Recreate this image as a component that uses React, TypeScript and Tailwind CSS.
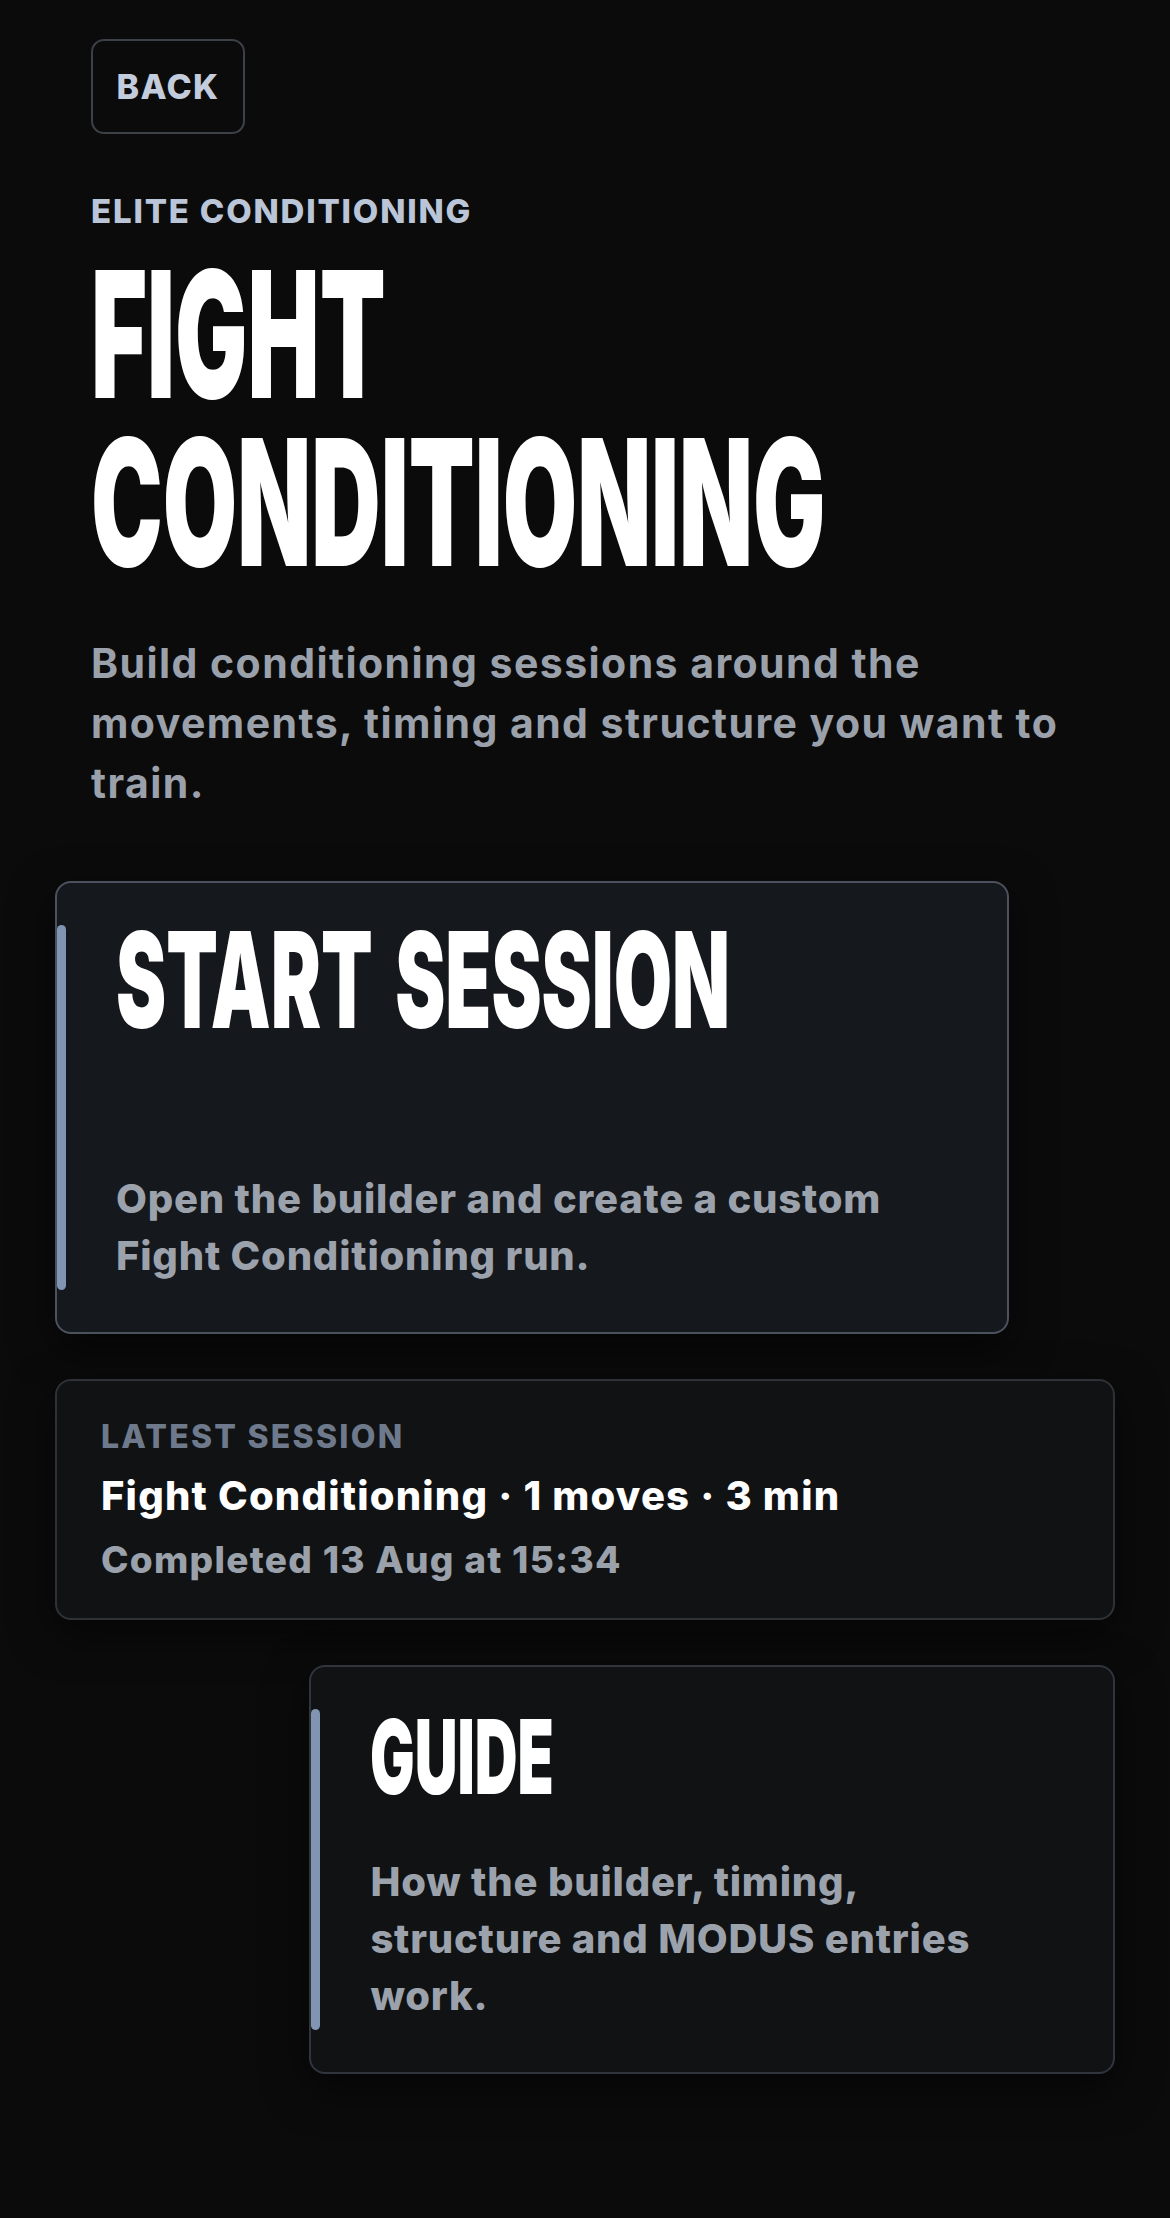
import React from "react";

// Condensed display type: Inter Black squeezed horizontally from the left edge.
const display =
  "block w-max whitespace-nowrap origin-left font-['Inter',sans-serif] font-black uppercase text-white";

type PanelProps = {
  title: string;
  body: string;
  titleClass: string;
  bodyGap: string;
  className?: string;
};

const Panel = ({ title, body, titleClass, bodyGap, className = "" }: PanelProps) => (
  <button
    type="button"
    className={`flex text-left rounded-[16px] border-2 shadow-[0_14px_44px_rgba(0,0,0,0.55)] ${className}`}
  >
    <span className="my-[42px] w-[9px] shrink-0 rounded-full bg-[#8194b1]" />
    <span className="flex min-w-0 flex-col pl-[50px] pr-[100px]">
      <span className={`${display} ${titleClass}`}>{title}</span>
      <span
        className={`${bodyGap} pb-[48px] text-[40px] leading-[57px] font-extrabold tracking-[0.02em] text-[#9ca2ac]`}
      >
        {body}
      </span>
    </span>
  </button>
);

const App = () => {
  return (
    <div className="min-h-screen overflow-hidden bg-[#0b0b0c] px-[55px] pt-[39px] pb-[145px] font-['Inter',sans-serif]">
      <header className="px-[36px]">
        <button
          type="button"
          className="h-[95px] w-[154px] rounded-[13px] border-2 border-[#3c4047] text-[34px] font-extrabold tracking-[0.04em] text-[#c2ccdc]"
        >
          BACK
        </button>
        <p className="mt-[57px] text-[33px] leading-[40px] font-extrabold tracking-[0.055em] text-[#bac6d8]">
          ELITE CONDITIONING
        </p>
        <h1 className={`${display} mt-[19px] scale-x-[0.546] text-[176px] leading-[168px]`}>
          Fight
          <br />
          Conditioning
        </h1>
        <p className="mt-[47px] text-[41px] leading-[60px] font-bold tracking-[0.035em] text-[#9ba1ab]">
          Build conditioning sessions around the movements, timing and structure you want to train.
        </p>
      </header>

      <main className="mt-[68px] flex flex-col gap-[45px]">
        <Panel
          title="Start Session"
          body="Open the builder and create a custom Fight Conditioning run."
          titleClass="pt-[27px] scale-x-[0.566] text-[133px] leading-[140px] [word-spacing:0.1em]"
          bodyGap="mt-[120px]"
          className="w-[90%] border-[#4b525d] bg-[#15181d]"
        />

        <section className="rounded-[16px] border-2 border-[#2e3136] bg-[#111214] px-[44px] pt-[36px] pb-[34px] shadow-[0_14px_44px_rgba(0,0,0,0.55)]">
          <p className="text-[32px] leading-[40px] font-extrabold tracking-[0.07em] text-[#6e7a8b]">
            LATEST SESSION
          </p>
          <p className="mt-[13px] text-[40px] leading-[52px] font-extrabold tracking-[0.03em] text-white">
            Fight Conditioning · 1 moves · 3 min
          </p>
          <p className="mt-[14px] text-[37px] leading-[48px] font-extrabold tracking-[0.035em] text-[#9aa1ab]">
            Completed 13 Aug at 15:34
          </p>
        </section>

        <Panel
          title="Guide"
          body="How the builder, timing, structure and MODUS entries work."
          titleClass="pt-[35px] scale-x-[0.575] text-[103px] leading-[110px]"
          bodyGap="mt-[41px]"
          className="ml-[24%] border-[#30353d] bg-[#101214]"
        />
      </main>
    </div>
  );
};

export default App;
